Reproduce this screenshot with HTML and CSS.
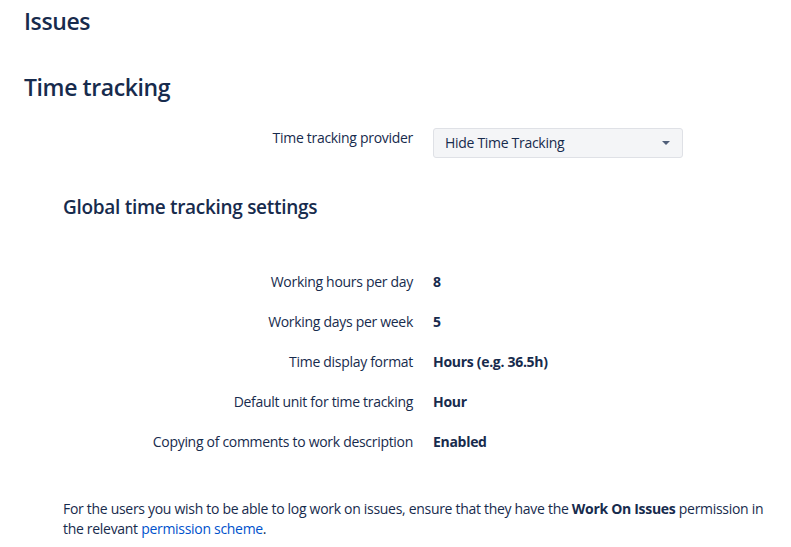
FILE: index.html
```html
<!DOCTYPE html>
<html>
<head>
<meta charset="utf-8">
<link rel="stylesheet" href="styles.css">
</head>
<body>
<div class="page">
  <h1 class="title">Issues</h1>
  <h2 class="section-title">Time tracking</h2>
  <div class="form-row provider-row">
    <div class="label">Time tracking provider</div>
    <div class="select">
      <span>Hide Time Tracking</span>
      <svg class="caret" width="8" height="4" viewBox="0 0 8 4"><path d="M0 0h8L4 4z" fill="#505f79"/></svg>
    </div>
  </div>
  <div class="global">
    <h3 class="sub-title">Global time tracking settings</h3>
  </div>
  <div class="settings">
    <div class="form-row"><div class="label">Working hours per day</div><div class="value">8</div></div>
    <div class="form-row"><div class="label">Working days per week</div><div class="value">5</div></div>
    <div class="form-row"><div class="label">Time display format</div><div class="value">Hours (e.g. 36.5h)</div></div>
    <div class="form-row"><div class="label">Default unit for time tracking</div><div class="value">Hour</div></div>
    <div class="form-row"><div class="label">Copying of comments to work description</div><div class="value">Enabled</div></div>
  </div>
  <p class="note">For the users you wish to be able to log work on issues, ensure that they have the <strong>Work On Issues</strong> permission in the relevant <a href="#">permission scheme</a>.</p>
</div>
</body>
</html>
```
FILE: styles.css
```css
html, body {
  margin: 0;
  padding: 0;
  background: #fff;
}
body {
  font-family: "Open Sans", "Noto Sans", sans-serif;
  font-size: 14px;
  line-height: 20px;
  letter-spacing: -0.3px;
  color: #172b4d;
}
.page {
  padding: 0 0 0 24px;
}
.title {
  margin: 0;
  padding-top: 6px;
  font-size: 23px;
  line-height: 30px;
  font-weight: 600;
  letter-spacing: -0.4px;
}
.section-title {
  margin: 36px 0 0;
  font-size: 23px;
  line-height: 30px;
  font-weight: 600;
  letter-spacing: -0.4px;
}
.form-row {
  display: grid;
  grid-template-columns: 389px 250px;
  column-gap: 20px;
  align-items: start;
}
.provider-row {
  margin-top: 26px;
}
.label {
  text-align: right;
}
.select {
  box-sizing: border-box;
  height: 30px;
  border: 1px solid #dfe1e6;
  border-radius: 3px;
  background: #f4f5f7;
  display: flex;
  align-items: center;
  justify-content: space-between;
  padding: 0 12px 0 11px;
}
.caret {
  display: block;
}
.global {
  padding-left: 39px;
  margin-top: 36px;
}
.sub-title {
  margin: 0;
  font-size: 19px;
  line-height: 26px;
  font-weight: 600;
  letter-spacing: -0.3px;
}
.settings {
  margin-top: 52px;
  display: flex;
  flex-direction: column;
  row-gap: 20px;
}
.value {
  font-weight: 700;
}
.note {
  margin: 47px 0 0;
  padding-left: 39px;
  padding-right: 8px;
}
.note a {
  color: #0052cc;
  text-decoration: none;
}
```
